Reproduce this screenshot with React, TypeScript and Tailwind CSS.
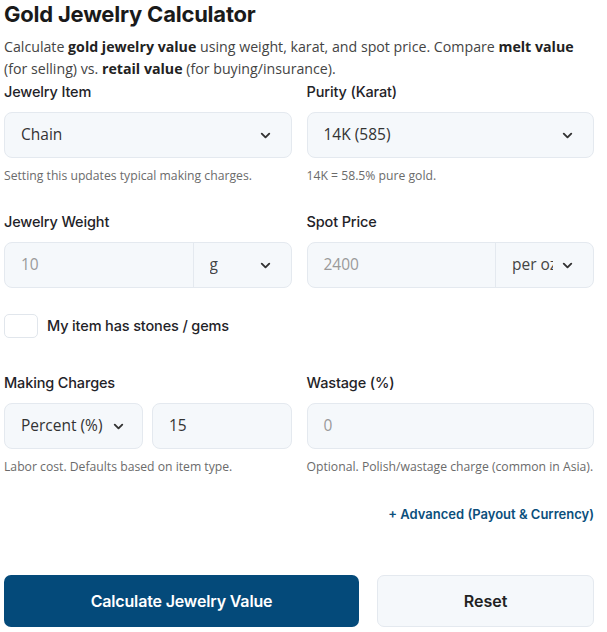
import { ChevronDown } from 'lucide-react';

const LABEL = "text-[14.5px] font-medium leading-5 text-[#1f2328] [font-family:Inter,'Noto_Sans',sans-serif] tracking-[-0.01em]";
const HINT = "text-[12.2px] leading-4 text-[#6b6b6b] [font-family:'Open_Sans',sans-serif]";
const BOX = 'h-[46px] rounded-[8px] border border-[#e4e9ef] bg-[#f5f8fb]';

function Chevron() {
  return <ChevronDown className="h-[15px] w-[15px] text-[#333]" strokeWidth={3} />;
}

function SelectBox({ value, className = '' }: { value: string; className?: string }) {
  return (
    <div className={`${BOX} flex items-center justify-between pl-4 pr-[18px] ${className}`}>
      <span className="text-[15.5px] text-[#333]">{value}</span>
      <Chevron />
    </div>
  );
}

function Field({ label, hint, children }: { label: string; hint?: string; children: React.ReactNode }) {
  return (
    <div className="flex flex-col">
      <div className={LABEL}>{label}</div>
      <div className="mt-[10px]">{children}</div>
      {hint ? <div className={`${HINT} mt-[10px]`}>{hint}</div> : null}
    </div>
  );
}

function Combo({ value, unit }: { value: string; unit: string }) {
  return (
    <div className={`${BOX} flex overflow-hidden`}>
      <div className="flex flex-1 items-center pl-4 text-[15.5px] text-[#9a9a9a]">{value}</div>
      <div className="flex w-[98px] items-center justify-between border-l border-[#e4e9ef] pl-4 pr-[18px] text-[15.5px] text-[#444]">
        <span className="w-[41px] shrink-0 overflow-hidden whitespace-nowrap">{unit}</span>
        <Chevron />
      </div>
    </div>
  );
}

export default function App() {
  return (
    <div className="ml-[4px] w-[590px] bg-white pb-[5px] [font-family:'Open_Sans',sans-serif]">
      <h1 className="text-[22px] font-bold leading-[28px] tracking-[-0.01em] text-[#1a1a1a] [font-family:Inter,sans-serif]">
        Gold Jewelry Calculator
      </h1>
      <p className="mt-[8px] text-[14.2px] leading-[22px] text-[#444]">
        Calculate <b className="text-[#222]">gold jewelry value</b> using weight, karat, and spot price. Compare{' '}
        <b className="text-[#222]">melt value</b> (for selling) vs. <b className="text-[#222]">retail value</b> (for buying/insurance).
      </p>

      <div className="mt-[2px] grid grid-cols-2 gap-x-[15px]">
        <Field label="Jewelry Item" hint="Setting this updates typical making charges.">
          <SelectBox value="Chain" />
        </Field>
        <Field label="Purity (Karat)" hint="14K = 58.5% pure gold.">
          <SelectBox value="14K (585)" />
        </Field>
      </div>

      <div className="mt-[28px] grid grid-cols-2 gap-x-[15px]">
        <Field label="Jewelry Weight">
          <Combo value="10" unit="g" />
        </Field>
        <Field label="Spot Price">
          <Combo value="2400" unit="per oz" />
        </Field>
      </div>

      <label className="mt-[26px] flex items-center gap-[9px]">
        <span className="h-[24px] w-[34px] rounded-[5px] border border-[#e1e6ec] bg-white" />
        <span className="text-[14.5px] font-medium tracking-[-0.01em] text-[#1f2328] [font-family:Inter,sans-serif]">
          My item has stones / gems
        </span>
      </label>

      <div className="mt-[35px] grid grid-cols-2 gap-x-[15px]">
        <Field label="Making Charges" hint="Labor cost. Defaults based on item type.">
          <div className="flex gap-[9px]">
            <SelectBox value="Percent (%)" className="w-[139px] !pr-[16px]" />
            <div className={`${BOX} flex flex-1 items-center pl-4 text-[15.5px] text-[#333]`}>15</div>
          </div>
        </Field>
        <Field label="Wastage (%)" hint="Optional. Polish/wastage charge (common in Asia).">
          <div className={`${BOX} flex items-center pl-4 text-[15.5px] text-[#9a9a9a]`}>0</div>
        </Field>
      </div>

      <div className="mt-[30px] flex justify-end">
        <a className="text-[13px] font-semibold text-[#0b4f7c] [font-family:Inter,sans-serif]">+ Advanced (Payout &amp; Currency)</a>
      </div>

      <div className="mt-[50px] flex gap-[18px]">
        <button className="h-[52px] w-[355px] rounded-[7px] bg-[#044a7a] text-[16px] font-semibold tracking-[-0.01em] text-white [font-family:Inter,sans-serif]">
          Calculate Jewelry Value
        </button>
        <button className="h-[52px] flex-1 rounded-[7px] border border-[#e4e9ef] bg-[#f5f8fb] text-[16px] font-semibold text-[#222] [font-family:Inter,sans-serif]">
          Reset
        </button>
      </div>
    </div>
  );
}
